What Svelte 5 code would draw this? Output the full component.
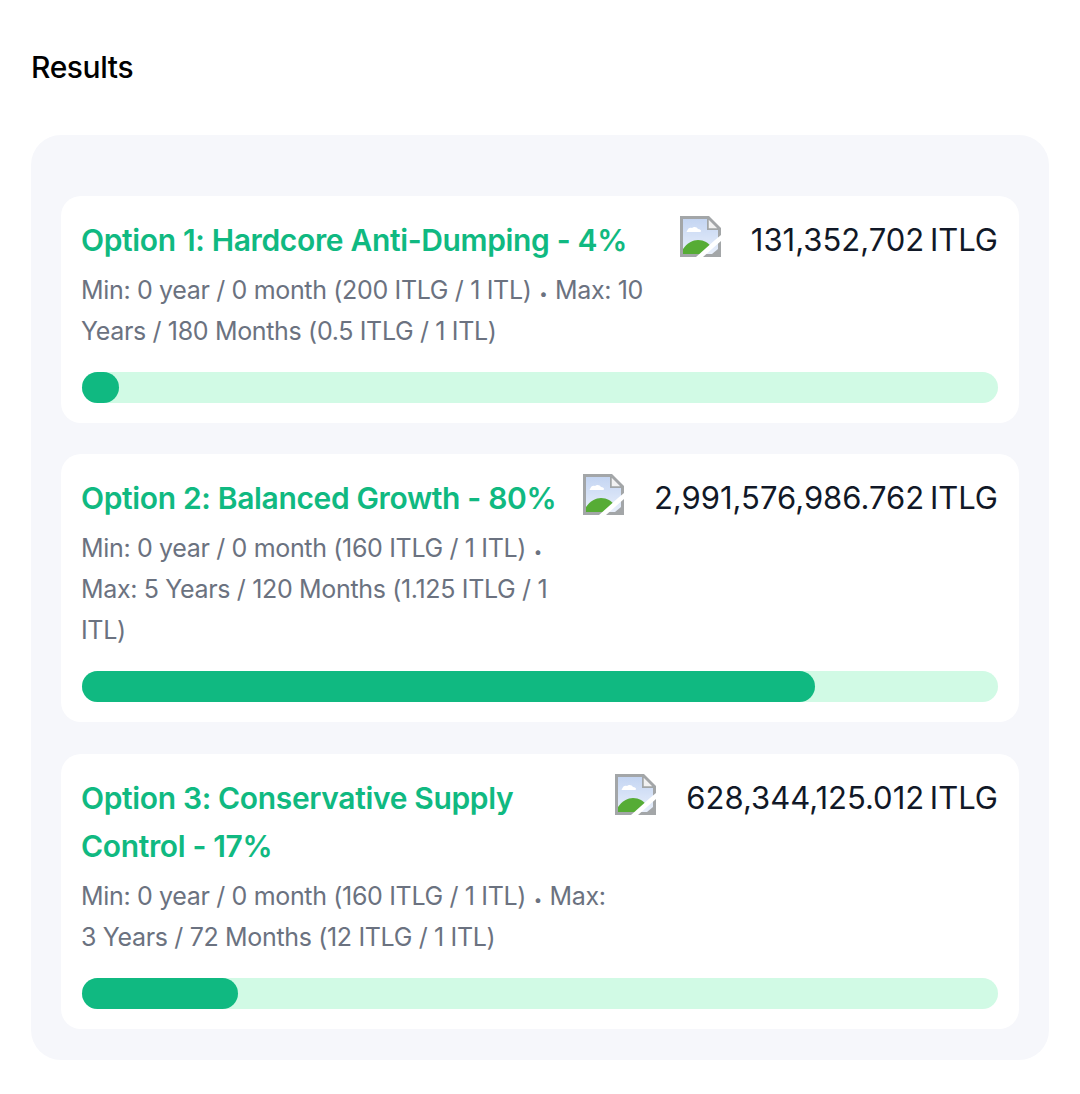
<script>
  const options = [
    { title: "Option 1: Hardcore Anti-Dumping - 4%", min: "Min: 0 year / 0 month (200 ITLG / 1 ITL)", max: "Max: 10 Years / 180 Months (0.5 ITLG / 1 ITL)", value: "131,352,702 ITLG", pct: 4 },
    { title: "Option 2: Balanced Growth - 80%", min: "Min: 0 year / 0 month (160 ITLG / 1 ITL)", max: "Max: 5 Years / 120 Months (1.125 ITLG / 1 ITL)", value: "2,991,576,986.762 ITLG", pct: 80 },
    { title: "Option 3: Conservative Supply Control - 17%", min: "Min: 0 year / 0 month (160 ITLG / 1 ITL)", max: "Max: 3 Years / 72 Months (12 ITLG / 1 ITL)", value: "628,344,125.012 ITLG", pct: 17 }
  ];
</script>

<main class="page">
  <h2 class="heading">Results</h2>
  <section class="panel">
    {#each options as opt}
      <article class="card">
        <div class="top">
          <div class="info">
            <h3 class="title">{opt.title}</h3>
            <p class="desc">{opt.min} <span class="dot">•</span> {opt.max}</p>
          </div>
          <div class="amount">
            <svg class="broken" viewBox="0 0 41 41" aria-hidden="true">
              <defs>
                <linearGradient id="sky" x1="0" y1="0" x2="0" y2="1">
                  <stop offset="0" stop-color="#c4d5f2" />
                  <stop offset="1" stop-color="#e8effb" />
                </linearGradient>
              </defs>
              <path d="M0 0H29L41 12V41H0Z" fill="#a3a6a8" />
              <path d="M3 3H27V14H38V38H3Z" fill="url(#sky)" />
              <path d="M28 2L39 13H28Z" fill="#f2f2f2" stroke="#a3a6a8" stroke-width="1.5" />
              <path d="M7 15c1-3 3-4 5-3 2-2 5-1 6 1 2 0 3 1 3 2 0 1-1 1-2 1H8c-1 0-2 0-1-1Z" fill="#fff" />
              <path d="M3 38V33C7 27 13 24 18 24 24 24 29 27 31 31L24 38Z" fill="#56ac35" />
              <path d="M41 19V25L23 41H16L35 24Z" fill="#fff" />
              <path d="M32 38H38V33Z" fill="#a3a6a8" />
            </svg>
            <span class="value">{opt.value}</span>
          </div>
        </div>
        <div class="track">
          <div class="fill" style="width: {opt.pct}%"></div>
        </div>
      </article>
    {/each}
  </section>
</main>

<style>
  :global(body) {
    margin: 0;
    background: #fff;
  }
  .page {
    padding: 0 31px 34px;
    font-family: Inter, "Liberation Sans", sans-serif;
  }
  .heading {
    margin: 0;
    padding: 48px 0 49px;
    line-height: 38px;
    font-size: 30px;
    letter-spacing: -0.4px;
    font-weight: 500;
    color: #000;
  }
  .panel {
    display: flex;
    flex-direction: column;
    gap: 31.4px;
    padding: 61px 30px 31px;
    background: #f6f7fb;
    border-radius: 30px;
  }
  .card {
    padding: 20px 21px;
    background: #fff;
    border-radius: 20px;
  }
  .top {
    display: flex;
    align-items: flex-start;
  }
  .info {
    flex: 1;
    min-width: 0;
    margin-left: -1px;
  }
  .title {
    margin: 0;
    font-size: 30px;
    line-height: 48px;
    letter-spacing: -0.35px;
    font-weight: 600;
    color: #10b981;
  }
  .desc {
    margin: 6px 0 0;
    font-size: 25px;
    line-height: 41px;
    letter-spacing: -0.34px;
    color: #6b7280;
  }
  .dot {
    font-size: 15px;
    line-height: 1;
    margin: 0 1px;
  }
  .amount {
    flex: none;
    display: flex;
    align-items: flex-start;
    gap: 30px;
  }
  .broken {
    width: 41px;
    height: 41px;
    filter: blur(0.4px);
  }
  .value {
    font-size: 31px;
    line-height: 48px;
    word-spacing: -3px;
    font-weight: 400;
    color: #111827;
  }
  .track {
    margin-top: 20px;
    height: 31px;
    background: #d1fae5;
    border-radius: 16px;
  }
  .fill {
    height: 100%;
    background: #10b981;
    border-radius: 16px;
  }
</style>
